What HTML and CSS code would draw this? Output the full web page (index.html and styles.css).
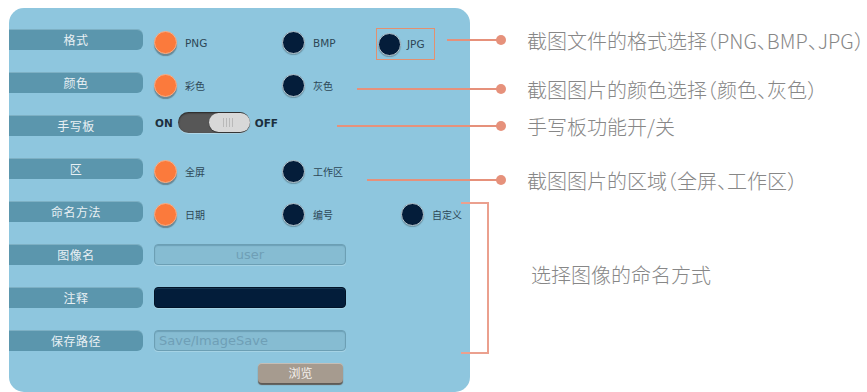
FILE: index.html
```html
<!DOCTYPE html>
<html lang="zh-CN">
<head>
<meta charset="utf-8">
<title>截图设置</title>
<link rel="stylesheet" href="styles.css">
</head>
<body>
<div class="page">
  <div class="panel">
    <div class="row">
      <div class="label">格式</div>
      <div class="opts">
        <div class="opt w128"><span class="dot on"></span><span class="otext latin">PNG</span></div>
        <div class="opt w95"><span class="dot"></span><span class="otext latin">BMP</span></div>
        <div class="opt boxed"><span class="dot"></span><span class="otext latin">JPG</span></div>
      </div>
    </div>
    <div class="row">
      <div class="label">颜色</div>
      <div class="opts">
        <div class="opt w128"><span class="dot on"></span><span class="otext">彩色</span></div>
        <div class="opt"><span class="dot"></span><span class="otext">灰色</span></div>
      </div>
    </div>
    <div class="row">
      <div class="label">手写板</div>
      <div class="switch-wrap">
        <span class="sw-text">ON</span>
        <span class="switch"><span class="knob"><span class="grip"></span></span></span>
        <span class="sw-text">OFF</span>
      </div>
    </div>
    <div class="row">
      <div class="label">区</div>
      <div class="opts">
        <div class="opt w128"><span class="dot on"></span><span class="otext">全屏</span></div>
        <div class="opt"><span class="dot"></span><span class="otext">工作区</span></div>
      </div>
    </div>
    <div class="row">
      <div class="label">命名方法</div>
      <div class="opts">
        <div class="opt w128"><span class="dot on"></span><span class="otext">日期</span></div>
        <div class="opt w119"><span class="dot"></span><span class="otext">编号</span></div>
        <div class="opt"><span class="dot"></span><span class="otext">自定义</span></div>
      </div>
    </div>
    <div class="row">
      <div class="label">图像名</div>
      <div class="field center">user</div>
    </div>
    <div class="row">
      <div class="label">注释</div>
      <div class="field dark"></div>
    </div>
    <div class="row">
      <div class="label">保存路径</div>
      <div class="field">Save/ImageSave</div>
    </div>
    <div class="btn-row">
      <div class="btn">浏览</div>
    </div>
  </div>

  <div class="callout c1"><span class="line"></span><span class="pin"></span></div>
  <div class="callout c2"><span class="line"></span><span class="pin"></span></div>
  <div class="callout c3"><span class="line"></span><span class="pin"></span></div>
  <div class="callout c4"><span class="line"></span><span class="pin"></span></div>
  <div class="bracket"></div>

  <div class="note n1">截图文件的格式选择（PNG、BMP、JPG）</div>
  <div class="note n2">截图图片的颜色选择（颜色、灰色）</div>
  <div class="note n3">手写板功能开/关</div>
  <div class="note n4">截图图片的区域（全屏、工作区）</div>
  <div class="note n5">选择图像的命名方式</div>
</div>
</body>
</html>
```

FILE: styles.css
```css
* { box-sizing: border-box; }
html, body { margin: 0; padding: 0; background: #ffffff; }
body {
  font-family: "Noto Sans CJK SC", "Noto Sans", sans-serif;
  width: 867px;
  height: 392px;
  overflow: hidden;
}
.page {
  position: relative;
  width: 867px;
  height: 392px;
  padding: 8px 0 0 9px;
}
.panel {
  width: 461px;
  height: 384px;
  background: #8ec6de;
  border-radius: 15px;
  padding-top: 21px;
}
.row {
  display: flex;
  align-items: center;
  height: 21px;
  margin-bottom: 22px;
}
.label {
  width: 134px;
  height: 21px;
  flex: none;
  background: #5b96ad;
  border-radius: 0 6px 6px 0;
  box-shadow: inset 0 1px 0 rgba(190, 225, 240, 0.35);
  color: #e8f0f4;
  font-size: 12px;
  line-height: 21px;
  text-align: center;
  letter-spacing: 0.5px;
}
.opts {
  display: flex;
  align-items: center;
  margin-left: 11px;
  margin-top: 6px;
}
.opt {
  display: flex;
  align-items: center;
  flex: none;
}
.w128 { width: 128px; }
.w95 { width: 94px; }
.w119 { width: 119px; }
.boxed {
  width: 59px;
  height: 32px;
  border: 1px solid #e3906f;
  padding-left: 1px;
  margin-top: 3px;
}
.dot {
  width: 23px;
  height: 23px;
  border-radius: 50%;
  background: #041d3a;
  border: 1px solid #b8c8d0;
  box-shadow: 0 1px 1px rgba(40, 60, 70, 0.35);
  flex: none;
}
.dot.on {
  background: #fb7a3c;
  border: 1px solid #f7b08a;
  box-shadow: 0 2px 1px rgba(60, 60, 60, 0.45);
}
.otext {
  margin-left: 8px;
  font-size: 10px;
  color: #2d4656;
}
.otext.latin {
  font-family: "DejaVu Sans", "Noto Sans", sans-serif;
  font-size: 10.5px;
}
.boxed .otext { margin-left: 6px; }

.switch-wrap {
  display: flex;
  align-items: center;
  margin-left: 12px;
  margin-top: -6px;
}
.sw-text {
  font-family: "DejaVu Sans", "Noto Sans", sans-serif;
  font-weight: bold;
  font-size: 10.5px;
  color: #1c2f3e;
}
.switch {
  width: 72px;
  height: 21px;
  margin: 0 5px 0 5px;
  border-radius: 11px;
  background: #575757;
  box-shadow: inset 0 1px 2px rgba(0,0,0,0.6), 0 1px 0 rgba(255,255,255,0.3);
  display: flex;
  justify-content: flex-end;
  padding: 1px 0;
}
.knob {
  width: 41px;
  height: 19px;
  border-radius: 10px;
  background: #d8d8d8;
  box-shadow: 0 1px 1px rgba(0,0,0,0.4);
  display: flex;
  justify-content: center;
  align-items: center;
}
.grip {
  width: 12px;
  height: 9px;
  background: repeating-linear-gradient(90deg, #b9b9b9 0 1px, transparent 1px 3px);
}

.field {
  width: 192px;
  height: 21px;
  margin-left: 11px;
  border-radius: 4px;
  background: #86bcd2;
  border: 1px solid #6c9fb4;
  box-shadow: inset 0 1px 1px rgba(60, 110, 135, 0.35), 0 1px 0 rgba(200,230,240,0.4);
  font-family: "DejaVu Sans", "Noto Sans", sans-serif;
  font-size: 13px;
  line-height: 19px;
  color: #6f9fb6;
  padding-left: 4px;
}
.field.center { text-align: center; padding-left: 0; }
.field.dark {
  background: #031d3a;
  border-color: #021428;
}
.btn-row {
  display: flex;
  margin-top: -10px;
  padding-left: 249px;
}
.btn {
  width: 85px;
  height: 20px;
  border-radius: 4px;
  background: #a69b8f;
  box-shadow: 0 2px 1px #5f5a55, inset 0 1px 0 rgba(255,255,255,0.35);
  color: #f4f0ec;
  font-size: 12px;
  line-height: 20px;
  text-align: center;
}

.callout {
  position: absolute;
  height: 10px;
}
.callout .line {
  position: absolute;
  left: 0;
  right: 4px;
  top: 4px;
  height: 2px;
  background: #e6917b;
}
.callout .pin {
  position: absolute;
  right: 0;
  top: 0;
  width: 10px;
  height: 10px;
  border-radius: 50%;
  background: #e6917b;
}
.c1 { left: 447px; width: 59px; top: 35px; }
.c2 { left: 357px; width: 149px; top: 84px; }
.c3 { left: 337px; width: 169px; top: 121px; }
.c4 { left: 367px; width: 139px; top: 175px; }
.bracket {
  position: absolute;
  left: 461px;
  top: 202px;
  width: 28px;
  height: 152px;
  border: 2px solid #eba08e;
  border-left: none;
}
.note {
  position: absolute;
  font-family: "Noto Sans CJK SC", sans-serif;
  font-weight: 300;
  font-size: 20px;
  line-height: 24px;
  color: #878787;
  white-space: nowrap;
  font-feature-settings: "halt";
}
.n1 { left: 527px; top: 29px; }
.n2 { left: 527px; top: 78px; }
.n3 { left: 527px; top: 115px; }
.n4 { left: 527px; top: 169px; }
.n5 { left: 531px; top: 263px; }
```
